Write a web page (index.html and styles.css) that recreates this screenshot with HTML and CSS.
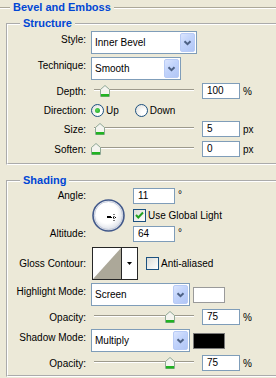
FILE: index.html
```html
<!DOCTYPE html>
<html lang="en">
<head>
  <meta charset="UTF-8" />
  <meta name="viewport" content="width=device-width, initial-scale=1.0" />
  <title>Layer Style - Bevel and Emboss</title>
  <link rel="stylesheet" href="styles.css">
</head>
<body>
  <div class="panel">
    <div class="panel-title">
      <span class="rule rule-short"></span>
      <span class="title">Bevel and Emboss</span>
      <span class="rule"></span>
    </div>

    <fieldset class="group structure">
      <legend>Structure</legend>

      <div class="row row-select row-first">
        <span class="label">Style:</span>
        <div class="select select-style">
          <span class="value">Inner Bevel</span>
          <span class="drop"><svg width="9" height="6" viewBox="0 0 9 6"><path d="M1.5 1.2 L4.5 4.2 L7.5 1.2" fill="none" stroke="#4d6185" stroke-width="2"/></svg></span>
        </div>
      </div>

      <div class="row row-select">
        <span class="label">Technique:</span>
        <div class="select select-tech">
          <span class="value">Smooth</span>
          <span class="drop"><svg width="9" height="6" viewBox="0 0 9 6"><path d="M1.5 1.2 L4.5 4.2 L7.5 1.2" fill="none" stroke="#4d6185" stroke-width="2"/></svg></span>
        </div>
      </div>

      <div class="row row-field row-depth">
        <span class="label">Depth:</span>
        <div class="slider">
          <span class="track"></span>
          <svg class="thumb" style="left: 9px" width="10" height="12" viewBox="0 0 10 12"><polygon points="0.5,4.5 5,0.5 9.5,4.5 9.5,11.5 0.5,11.5" fill="#f4f4ef" stroke="#8fa895"/><rect x="1" y="9" width="8" height="2.5" fill="#21b321"/></svg>
        </div>
        <span class="field">100</span>
        <span class="unit">%</span>
      </div>

      <div class="row row-dir">
        <span class="label">Direction:</span>
        <span class="option option-up"><span class="radio checked"><span class="dot"></span></span>Up</span>
        <span class="option"><span class="radio"></span>Down</span>
      </div>

      <div class="row row-field row-size">
        <span class="label">Size:</span>
        <div class="slider">
          <span class="track"></span>
          <svg class="thumb" style="left: 4px" width="10" height="12" viewBox="0 0 10 12"><polygon points="0.5,4.5 5,0.5 9.5,4.5 9.5,11.5 0.5,11.5" fill="#f4f4ef" stroke="#8fa895"/><rect x="1" y="9" width="8" height="2.5" fill="#21b321"/></svg>
        </div>
        <span class="field">5</span>
        <span class="unit">px</span>
      </div>

      <div class="row row-field row-soften">
        <span class="label">Soften:</span>
        <div class="slider">
          <span class="track"></span>
          <svg class="thumb" style="left: 0px" width="10" height="12" viewBox="0 0 10 12"><polygon points="0.5,4.5 5,0.5 9.5,4.5 9.5,11.5 0.5,11.5" fill="#f4f4ef" stroke="#8fa895"/><rect x="1" y="9" width="8" height="2.5" fill="#21b321"/></svg>
        </div>
        <span class="field">0</span>
        <span class="unit">px</span>
      </div>
    </fieldset>

    <fieldset class="group shading">
      <legend>Shading</legend>

      <div class="angle-grid">
        <span class="label label-angle">Angle:</span>
        <svg class="dial" width="33" height="33" viewBox="0 0 33 33">
          <defs>
            <radialGradient id="dialFill" cx="45%" cy="42%" r="60%">
              <stop offset="0.55" stop-color="#ffffff"/>
              <stop offset="1" stop-color="#d3d8e2"/>
            </radialGradient>
          </defs>
          <circle cx="16.5" cy="16.5" r="15.5" fill="url(#dialFill)" stroke="#42598a" stroke-width="1.6"/>
          <circle cx="16.5" cy="16.5" r="14" fill="none" stroke="#c4cbdb" stroke-width="1"/>
          <rect x="15" y="17" width="4" height="2" fill="#000"/>
          <path d="M19 18.5 H25 M22 15 V22" stroke="#000" stroke-width="1" stroke-dasharray="1 1"/>
        </svg>
        <div class="cell cell-angle"><span class="field field-angle">11</span><span class="deg">°</span></div>
        <div class="cell cell-global">
          <span class="check"><svg width="11" height="11" viewBox="0 0 11 11"><path d="M2 5 L4.3 7.5 L9 2.5" fill="none" stroke="#21a121" stroke-width="2"/></svg></span>
          <span class="check-text">Use Global Light</span>
        </div>
        <span class="label label-alt">Altitude:</span>
        <div class="cell cell-alt"><span class="field field-angle">64</span><span class="deg">°</span></div>
      </div>

      <div class="row row-gloss">
        <span class="label">Gloss Contour:</span>
        <div class="contour">
          <svg width="28" height="31" viewBox="0 0 28 31"><rect width="28" height="31" fill="#fff"/><polygon points="0,31 28,0 28,31" fill="#aca899"/></svg>
          <span class="contour-drop"><svg width="5" height="3" viewBox="0 0 5 3"><polygon points="0,0 5,0 2.5,3" fill="#000"/></svg></span>
        </div>
        <span class="check check-aa"></span>
        <span class="check-text">Anti-aliased</span>
      </div>

      <div class="row row-select row-mode">
        <span class="label">Highlight Mode:</span>
        <div class="select select-mode">
          <span class="value">Screen</span>
          <span class="drop"><svg width="9" height="6" viewBox="0 0 9 6"><path d="M1.5 1.2 L4.5 4.2 L7.5 1.2" fill="none" stroke="#4d6185" stroke-width="2"/></svg></span>
        </div>
        <span class="swatch swatch-white"></span>
      </div>

      <div class="row row-field row-opacity">
        <span class="label">Opacity:</span>
        <div class="slider">
          <span class="track"></span>
          <svg class="thumb" style="left: 74px" width="10" height="12" viewBox="0 0 10 12"><polygon points="0.5,4.5 5,0.5 9.5,4.5 9.5,11.5 0.5,11.5" fill="#f4f4ef" stroke="#8fa895"/><rect x="1" y="9" width="8" height="2.5" fill="#21b321"/></svg>
        </div>
        <span class="field">75</span>
        <span class="unit">%</span>
      </div>

      <div class="row row-select row-shadow">
        <span class="label">Shadow Mode:</span>
        <div class="select select-mode">
          <span class="value">Multiply</span>
          <span class="drop"><svg width="9" height="6" viewBox="0 0 9 6"><path d="M1.5 1.2 L4.5 4.2 L7.5 1.2" fill="none" stroke="#4d6185" stroke-width="2"/></svg></span>
        </div>
        <span class="swatch swatch-black"></span>
      </div>

      <div class="row row-field row-opacity2">
        <span class="label">Opacity:</span>
        <div class="slider">
          <span class="track"></span>
          <svg class="thumb" style="left: 74px" width="10" height="12" viewBox="0 0 10 12"><polygon points="0.5,4.5 5,0.5 9.5,4.5 9.5,11.5 0.5,11.5" fill="#f4f4ef" stroke="#8fa895"/><rect x="1" y="9" width="8" height="2.5" fill="#21b321"/></svg>
        </div>
        <span class="field">75</span>
        <span class="unit">%</span>
      </div>
    </fieldset>
  </div>
</body>
</html>
```

FILE: styles.css
```css
body {
  margin: 0;
  background-color: #ece9d8;
  font-family: "Liberation Sans", Arial, sans-serif;
  font-size: 10px;
  color: #000;
  overflow: hidden;
}
.panel {
  width: 276px;
}
/* section heading with etched line */
.panel-title {
  display: flex;
  align-items: flex-start;
  height: 14px;
}
.rule {
  flex: 1;
  margin-top: 7px;
  border-top: 1px solid #aca899;
  border-bottom: 1px solid #fff;
}
.rule-short {
  flex: none;
  width: 10px;
}
.title {
  padding: 0 3px;
  line-height: 14px;
  font-size: 11px;
  font-weight: bold;
  color: #0046d5;
}
/* group boxes, cut off by the right edge of the dialog */
.group {
  margin: 3px 0 0 6px;
  padding: 0 0 6px 0;
  border: 2px groove #fff;
  border-right: none;
  min-width: 0;
}
.group legend {
  margin-left: 12px;
  padding: 0 3px;
  line-height: 13px;
  font-size: 11px;
  font-weight: bold;
  color: #0046d5;
}
.shading {
  margin-top: 9px;
  padding-bottom: 4px;
}
/* rows */
.row {
  display: flex;
  align-items: center;
}
.label {
  flex: none;
  width: 78px;
  margin-right: 5px;
  text-align: right;
  white-space: nowrap;
}
.row-select {
  height: 23px;
  margin-top: 3px;
}
.row-select .label {
  align-self: flex-start;
  line-height: 13px;
  padding-top: 2px;
}
.row-first {
  margin-top: 1px;
}
.row-field {
  height: 16px;
  margin-top: 4px;
}
.row-depth {
  margin-top: 3px;
}
.row-dir {
  height: 13px;
  margin-top: 5px;
}
/* combo boxes */
.select {
  display: flex;
  height: 23px;
  box-sizing: border-box;
  border: 1px solid #7f9db9;
  background: #fff;
  padding: 1px;
}
.select .value {
  flex: 1;
  display: flex;
  align-items: center;
  padding-left: 2px;
  white-space: nowrap;
}
.select .drop {
  flex: none;
  width: 15px;
  display: flex;
  align-items: center;
  justify-content: center;
  box-sizing: border-box;
  border: 1px solid #b8cbf6;
  border-radius: 2px;
  background: linear-gradient(135deg, #dbe5fe 0%, #c1d3fb 45%, #b1c6f6 100%);
}
.select-style {
  width: 106px;
}
.select-tech {
  width: 90px;
}
.select-mode {
  width: 99px;
}
/* text fields */
.field {
  flex: none;
  width: 38px;
  height: 16px;
  box-sizing: border-box;
  border: 1px solid #7f9db9;
  background: #fff;
  padding-left: 4px;
  line-height: 14px;
}
.unit {
  margin-left: 3px;
}
/* sliders */
.slider {
  position: relative;
  flex: none;
  width: 107px;
  height: 16px;
  margin-right: 4px;
}
.track {
  display: block;
  margin: 6px 0 0 3px;
  width: 100px;
  border-top: 1px solid #9d9a8c;
  border-bottom: 1px solid #fff;
}
.thumb {
  position: absolute;
  top: 2px;
}
/* radio buttons */
.option {
  display: flex;
  align-items: center;
}
.option-up {
  margin-right: 16px;
}
.radio {
  display: flex;
  align-items: center;
  justify-content: center;
  width: 13px;
  height: 13px;
  box-sizing: border-box;
  margin-right: 2px;
  border: 1px solid #1c5180;
  border-radius: 50%;
  background: radial-gradient(circle at 70% 70%, #fff 20%, #dcdcd7 100%);
}
.radio .dot {
  width: 5px;
  height: 5px;
  border-radius: 50%;
  background: radial-gradient(circle at 40% 40%, #55d655, #21a121);
}
/* checkboxes */
.check {
  display: flex;
  align-items: center;
  justify-content: center;
  flex: none;
  width: 13px;
  height: 13px;
  box-sizing: border-box;
  border: 1px solid #1c5180;
  background: linear-gradient(135deg, #dcdcd7, #fff);
}
.check-text {
  margin-left: 2px;
  white-space: nowrap;
}
/* angle block */
.angle-grid {
  display: grid;
  grid-template-columns: 78px 47px auto;
  grid-template-rows: 21px 17px 16px;
  margin-top: 1px;
}
.angle-grid .label {
  width: auto;
  margin-right: 0;
  height: 16px;
  line-height: 16px;
}
.label-angle {
  grid-column: 1;
  grid-row: 1;
}
.label-alt {
  grid-column: 1;
  grid-row: 3;
}
.dial {
  grid-column: 2;
  grid-row: 1 / 4;
  align-self: center;
  margin-left: 6px;
}
.cell {
  display: flex;
  align-items: flex-start;
  grid-column: 3;
}
.cell-angle {
  grid-row: 1;
}
.cell-global {
  grid-row: 2;
  align-items: center;
  height: 13px;
}
.cell-alt {
  grid-row: 3;
}
.field-angle {
  width: 42px;
}
.deg {
  margin-left: 3px;
  line-height: 14px;
}
/* contour */
.row-gloss {
  height: 33px;
  margin-top: 5px;
}
.contour {
  display: flex;
  margin-left: 1px;
  height: 33px;
  box-sizing: border-box;
  border: 1px solid #262626;
  background: #fff;
}
.contour-drop {
  display: flex;
  align-items: center;
  justify-content: center;
  width: 15px;
  border-left: 1px solid #262626;
}
.check-aa {
  margin-left: 8px;
}
/* colour swatches */
.swatch {
  width: 32px;
  height: 16px;
  box-sizing: border-box;
  margin-left: 3px;
  align-self: center;
}
.swatch-white {
  background: #fff;
  border: 1px solid #9a9a9a;
}
.swatch-black {
  background: #000;
  border: 1px solid #7a7a7a;
}
.row-mode {
  margin-top: 3px;
}
.row-opacity {
  margin-top: 3px;
}
.row-shadow {
  margin-top: 4px;
}
.row-opacity2 {
  margin-top: 3px;
}
```
